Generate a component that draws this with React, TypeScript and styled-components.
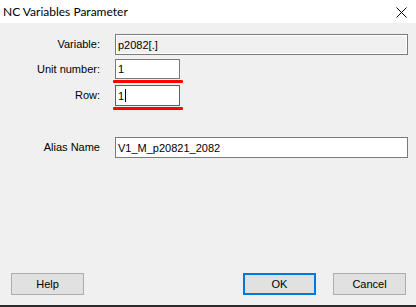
import React from "react";
import styled, { createGlobalStyle } from "styled-components";

const GlobalStyle = createGlobalStyle`
  html, body {
    margin: 0;
    padding: 0;
    background: #f0f0f0;
  }
  * {
    box-sizing: border-box;
  }
`;

const Window = styled.div`
  width: 416px;
  height: 307px;
  display: flex;
  flex-direction: column;
  background: #f0f0f0;
  font-family: "Liberation Sans", Arial, sans-serif;
  font-size: 11px;
  color: #000;
  overflow: hidden;
`;

const TitleBar = styled.div`
  height: 23px;
  background: #ffffff;
  display: flex;
  align-items: center;
  justify-content: space-between;
  padding: 0 9px 1px 3px;
`;

const Title = styled.span`
  font-family: Lato, "Liberation Sans", sans-serif;
  font-size: 12px;
  color: #000;
`;

const CloseIcon = styled.svg`
  width: 11px;
  height: 11px;
  margin-top: 2px;
`;

const Body = styled.div`
  flex: 1;
  display: flex;
  flex-direction: column;
  padding-top: 11px;
`;

const FieldRow = styled.div<{ $top: number }>`
  display: flex;
  align-items: center;
  gap: 15px;
  margin-top: ${(p) => p.$top}px;
`;

const Label = styled.label`
  width: 100px;
  text-align: right;
  line-height: 13px;
`;

const FieldWrap = styled.div<{ $marked?: boolean }>`
  position: relative;
  ${(p) =>
    p.$marked &&
    `
    &::after {
      content: "";
      position: absolute;
      left: -2px;
      right: -3px;
      bottom: -4px;
      height: 3px;
      background: #ff0000;
      border-radius: 1px;
    }
  `}
`;

const Field = styled.div<{ $w: number; $h?: number; $readonly?: boolean; $focused?: boolean }>`
  width: ${(p) => p.$w}px;
  height: ${(p) => p.$h ?? 21}px;
  display: flex;
  align-items: center;
  padding: 0 0 0 2px;
  border: 1px solid ${(p) => (p.$focused ? "#0078d7" : "#7a7a7a")};
  background: ${(p) => (p.$readonly ? "#f0f0f0" : "#ffffff")};
  box-shadow: ${(p) => (p.$readonly ? "inset 0 0 0 1px #ffffff" : "none")};
  white-space: nowrap;
`;

const Caret = styled.span`
  display: inline-block;
  width: 1px;
  height: 13px;
  background: #000;
  margin-left: 1px;
`;

const Spacer = styled.div`
  flex: 1;
`;

const ButtonBar = styled.div`
  display: flex;
  align-items: center;
  padding: 0 10px 0 11px;
  margin-bottom: 10px;
`;

const Button = styled.button<{ $default?: boolean }>`
  width: 73px;
  height: 22px;
  padding: 0;
  background: #e1e1e1;
  border: ${(p) => (p.$default ? "2px solid #0078d7" : "1px solid #adadad")};
  font-family: "Liberation Sans", Arial, sans-serif;
  font-size: 11px;
  color: #000;
  margin-left: ${(p) => (p.$default ? "0" : "0")};
`;

const ButtonGroup = styled.div`
  display: flex;
  gap: 17px;
`;

const Taskbar = styled.div`
  height: 2px;
  background: #2a2a2a;
`;

export default function App() {
  return (
    <>
      <GlobalStyle />
      <Window>
        <TitleBar>
          <Title>NC Variables Parameter</Title>
          <CloseIcon viewBox="0 0 11 11">
            <path d="M0.5 0.5 L10.5 10.5 M10.5 0.5 L0.5 10.5" stroke="#000" strokeWidth="1" fill="none" />
          </CloseIcon>
        </TitleBar>
        <Body>
          <FieldRow $top={0}>
            <Label>Variable:</Label>
            <Field $w={293} $readonly>
              p2082[.]
            </Field>
          </FieldRow>
          <FieldRow $top={4}>
            <Label>Unit number:</Label>
            <FieldWrap $marked>
              <Field $w={65} $h={20}>1</Field>
            </FieldWrap>
          </FieldRow>
          <FieldRow $top={6}>
            <Label>Row:</Label>
            <FieldWrap $marked>
              <Field $w={65} $focused>
                1<Caret />
              </Field>
            </FieldWrap>
          </FieldRow>
          <FieldRow $top={31}>
            <Label>Alias Name</Label>
            <Field $w={293}>V1_M_p20821_2082</Field>
          </FieldRow>
          <Spacer />
          <ButtonBar>
            <Button>Help</Button>
            <Spacer />
            <ButtonGroup>
              <Button $default>OK</Button>
              <Button>Cancel</Button>
            </ButtonGroup>
          </ButtonBar>
        </Body>
        <Taskbar />
      </Window>
    </>
  );
}
